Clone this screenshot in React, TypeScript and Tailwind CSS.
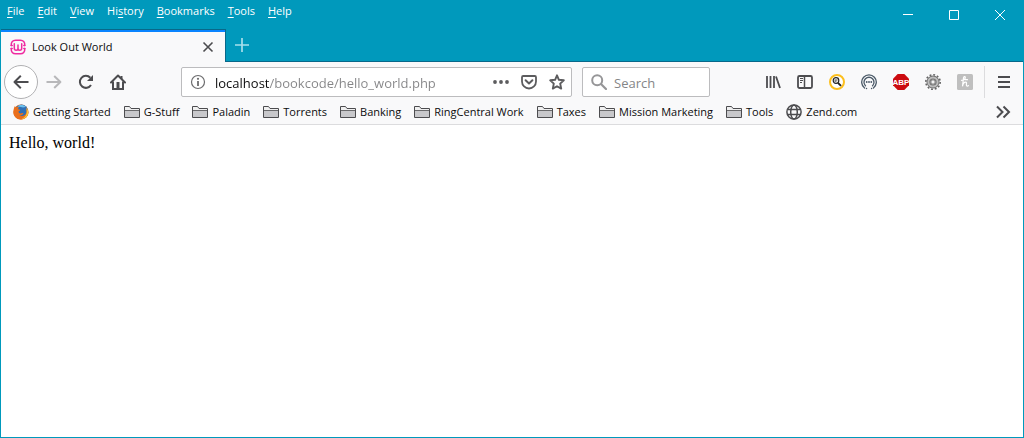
import React from "react";

const menus: [string, string, string][] = [
  ["", "F", "ile"],
  ["", "E", "dit"],
  ["", "V", "iew"],
  ["Hi", "s", "tory"],
  ["", "B", "ookmarks"],
  ["", "T", "ools"],
  ["", "H", "elp"],
];

const folders = ["G-Stuff", "Paladin", "Torrents", "Banking", "RingCentral Work", "Taxes", "Mission Marketing", "Tools"];

function Icon({ children, className = "size-4" }: { children: React.ReactNode; className?: string }) {
  return (
    <svg viewBox="0 0 16 16" className={`shrink-0 ${className}`} fill="none" aria-hidden="true">
      {children}
    </svg>
  );
}

function IconButton({ label, children, className = "" }: { label: string; children: React.ReactNode; className?: string }) {
  return (
    <button type="button" aria-label={label} className={`flex shrink-0 items-center justify-center text-[#4c4c4f] ${className}`}>
      {children}
    </button>
  );
}

function FirefoxIcon() {
  return (
    <Icon>
      <circle cx="8" cy="8" r="7.6" fill="#e66a17" />
      <circle cx="8.600" cy="6.400" r="6" fill="#2f6fb5" />
      <path d="M4.500 2.200C6.500.4 11 .6 13 3c-1.500-.2-2.500.8-4 .3C7.500 2.800 6 3.200 4.500 2.200z" fill="#6cc0ec" />
      <path d="M1.600 2.200c.5.7 1 1.100 1.700 1.200 1-.5 2-.4 2.700 0-.8.5-1 1.200-.8 1.900l2 .5c.1.8-.8 1.200-1.600 1.500-.2 1.700 1.200 2.500 2.400 2.200 1-.3 1.700-.6 2.500-.2-.8 1.800-2.700 2.400-4.200 1.900 2.600 1.700 6.200.6 7-2.800.3-1.300.1-2.800-.5-4 1.600 1.200 2.500 3 2.500 4.700-.4 3.700-3.400 6.300-7.300 6.300C3.700 15.600.4 12.300.4 8.200.4 6 .9 4 1.600 2.200z" fill="#ea6f1c" />
      <path d="M13.300 3.500c2 2.300 2.600 5.600 1 8.300-1.300 2.200-3.700 3.500-6.400 3.500 3.600-1.300 5.900-4.300 5.900-7.500 0-1.400-.1-3-.5-4.300z" fill="#fcc938" />
    </Icon>
  );
}

function FolderIcon() {
  return (
    <Icon>
      <path d="M.5 13.500v-11h5l1.500 2h8.500v9z" fill="#f0f0f0" stroke="#4c4c4f" />
      <path d="M1 6.500h14V13H1z" fill="#c8c8cb" />
      <path d="M1 6.500h14" stroke="#6a6a6c" />
    </Icon>
  );
}

function GlobeIcon() {
  return (
    <Icon>
      <g stroke="#4c4c4f" strokeWidth="1.500">
        <circle cx="8" cy="8" r="7.100" />
        <ellipse cx="8" cy="8" rx="3.300" ry="7.100" />
        <path d="M1.500 5.500h13M1.500 10.500h13" />
      </g>
    </Icon>
  );
}

function TitleBar() {
  return (
    <header className="flex h-[29px] justify-between text-white">
      <nav aria-label="Menu" className="flex gap-[13px] pl-1.5">
        {menus.map(([before, key, after]) => (
          <button key={before + key + after} type="button" className="h-[22px] text-[11px] leading-[22px] font-medium">
            {before}
            <span className="underline underline-offset-2">{key}</span>
            {after}
          </button>
        ))}
      </nav>
      <div className="flex">
        <button type="button" aria-label="Minimize" className="flex h-[30px] w-[46px] items-center justify-center">
          <svg viewBox="0 0 10 10" className="size-2.5" stroke="currentColor"><path d="M0 4.500h10" /></svg>
        </button>
        <button type="button" aria-label="Maximize" className="flex h-[30px] w-[46px] items-center justify-center">
          <svg viewBox="0 0 10 10" className="size-2.5" fill="none" stroke="currentColor"><path d="M.5.5h9v9h-9z" /></svg>
        </button>
        <button type="button" aria-label="Close window" className="flex h-[30px] w-[46px] items-center justify-center">
          <svg viewBox="0 0 10 10" className="size-2.5" stroke="currentColor"><path d="M0 0l10 10M10 0L0 10" /></svg>
        </button>
      </div>
    </header>
  );
}

function TabStrip() {
  return (
    <div className="flex h-[33px]">
      <div className="flex w-[225px] flex-col border-t border-r border-[#08688a] bg-[#f9f9fa]">
        <div className="h-0.5 bg-[#0a84ff]" />
        <div className="flex flex-1 items-center pr-[9px] pl-[9px]">
          <Icon>
            <g stroke="#ef2aa0" strokeWidth="1.500" strokeLinecap="round" strokeLinejoin="round">
              <path d="M1.200 6.500C1 3 2.800 1.300 5.600 1.300h4.800c2.800 0 4.600 1.700 4.400 5.200M1.200 9.500C1 13 2.800 14.700 5.600 14.700h4.800c2.800 0 4.600-1.700 4.400-5.200" />
              <path d="M1.200 6.500h1M13.800 6.500h1M1.200 9.500h1M13.800 9.500h1" />
              <path d="M4.300 4.800v4.400c0 2.600 3.700 2.600 3.700 0V6v3.200c0 2.600 3.700 2.600 3.700 0V4.800" />
            </g>
          </Icon>
          <span className="ml-1.5 flex-1 text-[11px]">Look Out World</span>
          <IconButton label="Close tab" className="size-4">
            <Icon><path d="M3.500 3.500l9 9M12.500 3.500l-9 9" stroke="currentColor" strokeWidth="1.600" /></Icon>
          </IconButton>
        </div>
      </div>
      <div className="flex flex-1 items-center border-b border-[#08688a] pl-2">
        <button type="button" aria-label="New tab" className="text-[#a8dfec]">
          <Icon><path d="M8 1v14M1 8h14" stroke="currentColor" strokeWidth="1.700" /></Icon>
        </button>
      </div>
    </div>
  );
}

function Toolbar() {
  return (
    <div className="flex h-[38px] items-center pt-px pl-[3px]">
      <IconButton label="Back" className="size-[34px] rounded-full border border-[#b1b1b3] bg-white">
        <Icon><path d="M15.500 8H1.500M7.800 1.800L1.500 8l6.300 6.200" stroke="currentColor" strokeWidth="2" strokeLinejoin="round" /></Icon>
      </IconButton>
      <div className="ml-2 flex gap-4">
        <button type="button" aria-label="Forward" disabled className="text-[#b8b8ba]">
          <Icon><path d="M.5 8h14M8.200 2l6.200 6-6.200 6" stroke="currentColor" strokeWidth="2" strokeLinejoin="round" /></Icon>
        </button>
        <IconButton label="Reload">
          <Icon>
            <path d="M13 11a6 6 0 1 1-.7-7.200" stroke="currentColor" strokeWidth="2" />
            <path d="M15 1v6H9z" fill="currentColor" />
          </Icon>
        </IconButton>
        <IconButton label="Home">
          <Icon>
            <path d="M1 8.500L8 1.500l7 7" stroke="currentColor" strokeWidth="2" strokeLinecap="round" strokeLinejoin="round" />
            <path d="M3 7.500V15h10V7.500M11.500 2v3" stroke="currentColor" strokeWidth="2" />
            <path d="M6.500 8h3v6h-3z" fill="currentColor" />
          </Icon>
        </IconButton>
      </div>
      <div className="ml-[55px] flex h-[30px] flex-1 items-center rounded-xs border border-[#bcbcbe] bg-white pr-1.5 pl-2">
        <IconButton label="Site information">
          <Icon>
            <circle cx="8" cy="8" r="6.500" stroke="#6c6c6e" strokeWidth="1.200" />
            <path d="M8 7v5" stroke="#6c6c6e" strokeWidth="1.800" />
            <circle cx="8" cy="4.800" r="1.100" fill="#6c6c6e" />
          </Icon>
        </IconButton>
        <input
          aria-label="Address"
          defaultValue="localhost/bookcode/hello_world.php"
          className="ml-[9px] h-7 min-w-0 flex-1 bg-[linear-gradient(90deg,#0c0c0d_54px,#858587_54px)] bg-clip-text pt-0.5 text-[13px] text-transparent outline-none"
        />
        <div className="flex gap-3">
          <IconButton label="Page actions">
            <Icon><g fill="#5c5c5e"><circle cx="2" cy="8" r="1.900" /><circle cx="8" cy="8" r="1.900" /><circle cx="14" cy="8" r="1.900" /></g></Icon>
          </IconButton>
          <IconButton label="Save to Pocket">
            <Icon>
              <path d="M2.200 2h11.600c.7 0 1.200.5 1.200 1.200V7.500a7 7 0 0 1-14 0V3.200C1 2.500 1.500 2 2.200 2z" stroke="#5c5c5e" strokeWidth="1.800" />
              <path d="M4.600 6.300L8 9.500l3.400-3.200" stroke="#5c5c5e" strokeWidth="2" strokeLinecap="round" strokeLinejoin="round" />
            </Icon>
          </IconButton>
          <IconButton label="Bookmark this page">
            <Icon><path d="M8 1.300l1.900 4.500 4.900.5-3.600 3.300 1 5L8 12.200l-4.200 2.400 1-5L1.200 6.300l4.900-.5z" stroke="#5c5c5e" strokeWidth="1.900" strokeLinejoin="round" /></Icon>
          </IconButton>
        </div>
      </div>
      <label className="ml-2.5 flex h-[30px] w-32 items-center rounded-xs border border-[#bcbcbe] bg-white pl-2">
        <Icon><path d="M10.500 10.500L15 15" stroke="#969698" strokeWidth="2.200" strokeLinecap="round" /><circle cx="6.200" cy="6.200" r="5" stroke="#969698" strokeWidth="2" /></Icon>
        <input aria-label="Search" placeholder="Search" className="ml-[7px] h-7 w-full min-w-0 pt-0.5 text-[13px] outline-none placeholder:text-[#858587]" />
      </label>
      <div className="ml-[55px] flex gap-4">
        <IconButton label="Library">
          <Icon><path d="M2 2v12M5.500 2v12M9 2v12M11 2.500l4 11.500" stroke="currentColor" strokeWidth="1.800" /></Icon>
        </IconButton>
        <IconButton label="Sidebars">
          <Icon>
            <rect x="1" y="2" width="14" height="12" rx="1.500" stroke="currentColor" strokeWidth="1.800" />
            <path d="M7.500 2v12" stroke="currentColor" strokeWidth="1.500" />
            <path d="M3 4.500h3M3 6.500h3M3 8.500h2" stroke="currentColor" />
          </Icon>
        </IconButton>
        <IconButton label="Page search">
          <Icon>
            <circle cx="8" cy="8" r="7" fill="#fff" stroke="#fcbf1e" strokeWidth="2" />
            <circle cx="7" cy="6.500" r="2.800" stroke="#222" strokeWidth="1.200" />
            <path d="M9 8.800l3 3" stroke="#222" strokeWidth="1.900" />
            <path d="M5.500 6h3M5.500 7.200h2" stroke="#222" strokeWidth=".8" />
          </Icon>
        </IconButton>
        <IconButton label="Assistant">
          <Icon>
            <g stroke="#4a5967" strokeWidth="1.300" strokeLinecap="round">
              <path d="M3.600 14a7.300 7.300 0 1 1 8.800 0" />
              <path d="M4.500 11.800a5 5 0 1 1 7 0" />
              <path d="M5.500 14.500h.1M10.500 14.500h.1" />
            </g>
            <g fill="#4a5967"><circle cx="5.700" cy="8" r=".9" /><circle cx="8" cy="8" r=".9" /><circle cx="10.300" cy="8" r=".9" /></g>
          </Icon>
        </IconButton>
        <IconButton label="Adblock Plus">
          <Icon>
            <path d="M4.700 0h6.600L16 4.700v6.600L11.300 16H4.700L0 11.300V4.700z" fill="#cc0b10" />
            <text x="8" y="10.800" textAnchor="middle" fill="#fff" fontSize="8" fontWeight="700" fontFamily="Liberation Sans Narrow, Liberation Sans, sans-serif">ABP</text>
          </Icon>
        </IconButton>
        <IconButton label="Settings">
          <Icon>
            <circle cx="8" cy="8" r="7.200" stroke="#666" strokeWidth="1.600" strokeDasharray="1.900 1.870" />
            <circle cx="8" cy="8" r="4.500" stroke="#707070" strokeWidth="4" />
            <circle cx="8" cy="8" r="4.600" stroke="#bdbdbd" strokeWidth="2" />
            <circle cx="8" cy="8" r="2.200" fill="#f3f3f3" stroke="#6d6d6d" strokeWidth=".9" />
          </Icon>
        </IconButton>
        <IconButton label="Honey">
          <Icon>
            <rect width="16" height="16" rx="1.500" fill="#bfbfbf" />
            <path d="M4.500 6.300c1.600-.3 3.800-1.500 3.800-2.900 0-1.200-1.500-.9-1.800.5L5.500 12.300c.4-2.300 1.600-4.200 3.100-4.200 1.600 0 .6 1.900.8 3.100.2 1.200 1.300 1.300 2.100.4M8 5.700h2.500" stroke="#fff" strokeWidth="1.200" strokeLinecap="round" />
          </Icon>
        </IconButton>
      </div>
      <div className="ml-[11px] h-8 w-px bg-[#dcdcde]" />
      <IconButton label="Open menu" className="mr-[11px] ml-[11px]">
        <Icon><path d="M2 3h12M2 8h12M2 13h12" stroke="currentColor" strokeWidth="2" /></Icon>
      </IconButton>
    </div>
  );
}

function Bookmarks() {
  const item = "flex shrink-0 items-center gap-1 whitespace-nowrap";
  return (
    <nav aria-label="Bookmarks" className="flex h-[25px] items-center gap-[13px] border-b border-[#dcdcde] pr-3 pl-3 text-[11px]">
      <a href="#getting-started" className={item}><FirefoxIcon />Getting Started</a>
      {folders.map((name) => (
        <button key={name} type="button" className={item}><FolderIcon />{name}</button>
      ))}
      <a href="#zend" className={item}><GlobeIcon />Zend.com</a>
      <IconButton label="More bookmarks" className="ml-auto">
        <Icon><path d="M2 2.500L7.500 8 2 13.500M8.500 2.500L14 8l-5.500 5.500" stroke="currentColor" strokeWidth="2" /></Icon>
      </IconButton>
    </nav>
  );
}

export default function App() {
  return (
    <div className="flex min-h-screen flex-col border-x border-b border-[#0099bc] bg-[#0099bc] font-['Open_Sans','Noto_Sans',sans-serif] text-[#0c0c0d]">
      <TitleBar />
      <TabStrip />
      <div className="bg-[#f9f9fa]">
        <Toolbar />
        <Bookmarks />
      </div>
      <main className="flex-1 bg-white p-2 font-['Liberation_Serif',serif] text-base leading-5 text-black">
        <p>Hello, world!</p>
      </main>
    </div>
  );
}
